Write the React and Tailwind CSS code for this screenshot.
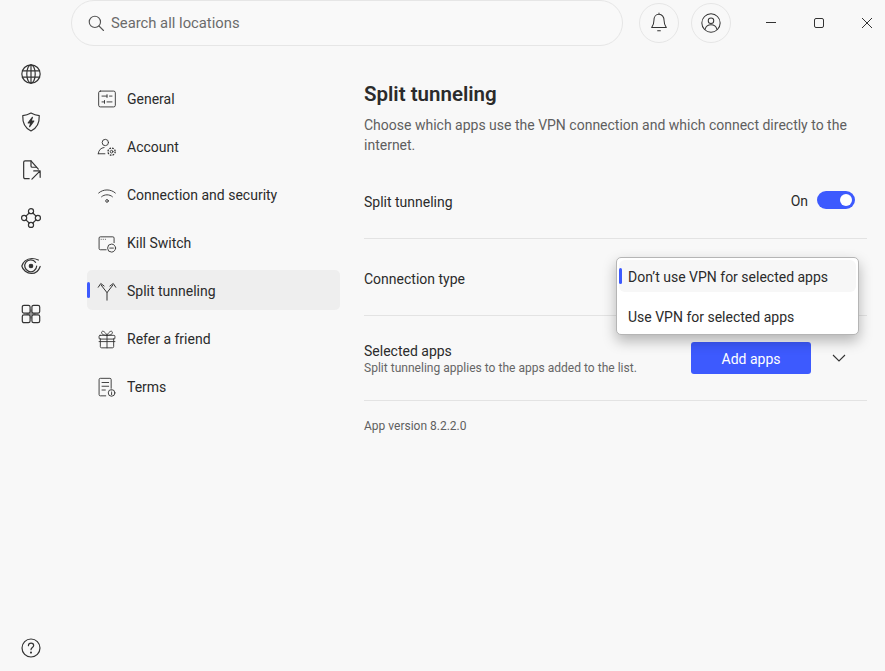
const S = ({ size = 22, sw = 1.3, children, className = "" }) => (
  <svg width={size} height={size} viewBox="0 0 24 24" fill="none" stroke="#333" strokeWidth={sw} strokeLinecap="round" strokeLinejoin="round" className={className}>{children}</svg>
);

const Globe = () => (<S><circle cx="12" cy="12" r="10"/><ellipse cx="12" cy="12" rx="4.600" ry="10"/><path d="M12 2v20M2.600 8.500h18.800M2.600 15.500h18.800"/></S>);
const Shield = () => (<S><path d="M12 2.200c3 1.800 5.600 2.600 9 2.800.3 7.600-1.800 13.600-9 16.800C4.800 18.600 2.700 12.600 3 5c3.400-.2 6-1 9-2.800z"/><path d="M13.500 7l-4.500 6h3l-1.500 4 4.500-6h-3z" fill="#333"/></S>);
const FileOut = () => (<S><path d="M10 21.500H5.500A1.500 1.500 0 0 1 4 20V3.500A1.500 1.500 0 0 1 5.500 2H12l8 9"/><path d="M12 2v5.500c0 1 .5 1.500 1.500 1.500H18"/><path d="M13 22l9-9M15 13h7v7"/></S>);
const Nodes = () => (<S><circle cx="12" cy="4.500" r="2.800"/><circle cx="12" cy="19.500" r="2.800"/><circle cx="4.500" cy="12" r="2.800"/><circle cx="19.500" cy="12" r="2.800"/><path d="M10 6.500l-3.500 3.500M14 6.500l3.500 3.500M10 17.500L6.500 14M14 17.500l3.500-3.500"/></S>);
const Target = () => (<S><path d="M20 5.500C18 4.500 15.500 3.800 13 3.800 7 3.800 3 8 2 12c1 4.500 5.500 8.200 10.500 8.200 4.500 0 8-3.300 9.500-7.700"/><path d="M17 8a6.500 6.500 0 1 0 1.200 4"/><circle cx="12" cy="12" r="1.900" fill="#333"/></S>);
const Apps = () => (<S><path d="M11 7h2v4h4v2h-4v4h-2v-4H7v-2h4z" fill="#999" stroke="none"/><rect x="2.500" y="2.500" width="8.500" height="8.500" rx="1.800"/><rect x="13" y="2.500" width="8.500" height="8.500" rx="1.800"/><rect x="2.500" y="13" width="8.500" height="8.500" rx="1.800"/><rect x="13" y="13" width="8.500" height="8.500" rx="1.800"/></S>);
const Help = () => (<S><circle cx="12" cy="12" r="9.800"/><path d="M9.200 9.500c0-1.700 1.300-2.800 2.900-2.800s2.800 1.100 2.800 2.500c0 2.200-2.900 2.300-2.900 4.600"/><circle cx="12" cy="17" r=".5" fill="#333"/></S>);

const Sliders = () => (<S size={20} sw={1.1}><rect x="2" y="2.500" width="20" height="19" rx="2"/><path d="M6 8.500h6M15 8.500h3M12 6.800v3.400M6 15.500h3M12 15.500h6M9 13.800v3.400"/></S>);
const AccountI = () => (<S size={21} sw={1.1}><circle cx="10" cy="6" r="3.800"/><path d="M1.500 19.500c.5-4.500 3-7 7-7.500M1.500 19.500h8"/><circle cx="17.500" cy="17" r="4.300" strokeDasharray="2 1.400" strokeLinecap="butt" strokeWidth="1.600"/><circle cx="17.500" cy="17" r="1.600"/></S>);
const Wifi = () => (<S size={21} sw={1.1}><path d="M2 9c5.500-5 14.500-5 20 0M5.500 13.500c3.500-3.200 9.500-3.200 13 0"/><circle cx="12" cy="18.500" r="1.600"/></S>);
const Kill = () => (<S size={21} sw={1.1}><path d="M11 19.500H4a1.500 1.500 0 0 1-1.500-1.500V5.500A1.500 1.500 0 0 1 4 4h15A1.500 1.500 0 0 1 20.500 5.500V11"/><path d="M5 7h.01M7.500 7h.01M10 7h.01"/><circle cx="17.500" cy="17.500" r="4.800"/><path d="M15.300 17.500h4.400"/></S>);
const Split = () => (<S size={22} sw={1.2}><path d="M12 23v-9L5 5M12 14l7-9M1.500 7.500L4.500 3l4 3M15.500 6l4-3 3 4.500"/></S>);
const Gift = () => (<S size={21} sw={1.1}><path d="M4 11v9.500A1.500 1.500 0 0 0 5.500 22h13a1.500 1.500 0 0 0 1.500-1.500V11"/><rect x="2.500" y="7" width="19" height="4.500" rx="1.200"/><path d="M12 7v15M2.500 14.500h19M12 7C10 2.500 6 .5 5.500 3.500 5.200 6 9 7 12 7zM12 7c2-4.500 6-6.500 6.500-3.500.3 2.500-3.500 3.500-6.500 3.500z"/></S>);
const Terms = () => (<S size={23} sw={1.1}><path d="M10.500 22H4a1.500 1.500 0 0 1-1.500-1.500v-18A1.500 1.500 0 0 1 4 1h11.500A1.500 1.500 0 0 1 17 2.500V13"/><path d="M6 6h8M6 10.500h8M6 15h4"/><circle cx="17.500" cy="18.500" r="4"/><path d="M17.500 18v2.700M17.500 16.200h.01"/></S>);

const rail = [Globe, Shield, FileOut, Nodes, Target, Apps];
const nav = [
  ["General", Sliders], ["Account", AccountI], ["Connection and security", Wifi], ["Kill Switch", Kill],
  ["Split tunneling", Split], ["Refer a friend", Gift], ["Terms", Terms],
];

export default function App() {
  return (
    <div className="flex h-[671px] w-[885px] overflow-hidden bg-[#f8f8f8] text-[#2b2b2b]" style={{ fontFamily: 'Roboto, sans-serif' }}>
      <aside className="flex w-[62px] shrink-0 flex-col items-center pb-[11px] pt-[49px]">
        <div className="flex flex-col gap-[24px] pt-[13px]">
          {rail.map((I, i) => <div key={i} className="flex h-[24px] w-[24px] items-center justify-center"><I /></div>)}
        </div>
        <div className="mt-auto flex h-[24px] items-center"><Help /></div>
      </aside>

      <div className="flex min-w-0 flex-1 flex-col">
        <header className="flex h-[45px] shrink-0 items-center pl-[9px]">
          <div className="flex h-[46px] w-[552px] shrink-0 items-center gap-[6px] rounded-full border border-[#e6e6e6] bg-[#f9f9f9] pl-[15px]">
            <svg width="18" height="18" viewBox="0 0 24 24" fill="none" stroke="#555" strokeWidth="1.500" strokeLinecap="round"><circle cx="10.500" cy="10.500" r="7.500"/><path d="M16 16l6 6"/></svg>
            <span className="pt-[2px] text-[14.8px] text-[#6b6b6b]">Search all locations</span>
          </div>
          <button className="ml-[16px] flex h-[40px] w-[40px] shrink-0 items-center justify-center rounded-full border border-[#e6e6e6]">
            <S size={22} sw={1.1}><path d="M12 2.500c-3.500 0-5.500 3-5.500 6.500 0 4-1 6-2.500 8h16c-1.500-2-2.500-4-2.500-8 0-3.500-2-6.500-5.500-6.500zM12 1v1.500M10.500 20.500h3"/></S>
          </button>
          <button className="ml-[12px] flex h-[40px] w-[40px] shrink-0 items-center justify-center rounded-full border border-[#e6e6e6]">
            <S size={22} sw={1.1}><circle cx="12" cy="12" r="10"/><circle cx="12" cy="9.500" r="3"/><path d="M5.500 19c1-3.500 3.500-5 6.500-5s5.500 1.500 6.500 5"/></S>
          </button>
          <div className="ml-[16px] flex">
            <div className="flex h-[46px] w-[48px] items-center justify-center"><span className="h-[1px] w-[10px] bg-[#333]" /></div>
            <div className="flex h-[46px] w-[48px] items-center justify-center"><span className="h-[10px] w-[10px] rounded-[2px] border border-[#333]" /></div>
            <div className="flex h-[46px] w-[48px] items-center justify-center">
              <svg width="12" height="12" viewBox="0 0 12 12" stroke="#333" strokeWidth="1"><path d="M1 1l10 10M11 1L1 11"/></svg>
            </div>
          </div>
        </header>

        <div className="flex flex-1">
          <nav className="ml-[25px] flex w-[253px] shrink-0 flex-col gap-[8px] pt-[33px]">
            {nav.map(([label, I]) => {
              const on = label === "Split tunneling";
              return (
                <div key={label} className={`relative flex h-[40px] items-center gap-[10px] rounded-[5px] pl-[10px] pt-[2px] text-[14px] ${on ? "bg-[#eeeeee]" : ""}`}>
                  {on && <span className="absolute left-0 top-[12px] h-[16px] w-[3px] rounded-full bg-[#3d5afe]" />}
                  <span className="flex w-[20px] justify-center"><I /></span>
                  <span>{label}</span>
                </div>
              );
            })}
          </nav>

          <main className="ml-[24px] w-[503px] shrink-0 pt-[35px]">
            <h1 className="text-[20.5px] font-semibold leading-[28px]">Split tunneling</h1>
            <p className="mt-[7px] text-[14px] leading-[20px] text-[#5f5f5f]">Choose which apps use the VPN connection and which connect directly to the internet.</p>

            <div className="mt-[10px] flex h-[74px] items-center justify-between border-b border-[#e3e3e3] text-[14px]">
              <span className="pt-[2px]">Split tunneling</span>
              <span className="flex items-center gap-[9px] pr-[12px]">
                On
                <span className="mb-[4px] flex h-[18px] w-[38px] items-center justify-end rounded-full bg-[#3d5afe] pr-[3px]"><span className="h-[12px] w-[12px] rounded-full bg-white" /></span>
              </span>
            </div>

            <div className="relative flex h-[77px] items-center border-b border-[#e3e3e3] text-[14px]">
              <span className="pt-[4px]">Connection type</span>
              <div className="absolute left-[252px] top-[18px] z-10 flex h-[78px] w-[243px] flex-col gap-[8px] rounded-[5px] border border-[#b5b5b5] bg-white p-[2px] shadow-[0_6px_14px_rgba(0,0,0,0.28)]">
                <div className="relative flex h-[32px] items-center rounded-[6px] bg-[#f7f7f7] pl-[9px] pt-[2px]">
                  <span className="absolute left-0 top-[8px] h-[16px] w-[3px] rounded-full bg-[#3d5afe]" />
                  Don’t use VPN for selected apps
                </div>
                <div className="flex h-[32px] items-center pl-[9px] pt-[2px]">Use VPN for selected apps</div>
              </div>
            </div>

            <div className="flex h-[85px] items-center justify-between border-b border-[#e3e3e3]">
              <div className="pt-[2px]">
                <div className="text-[14px] leading-[18px]">Selected apps</div>
                <div className="text-[12.05px] leading-[16px] text-[#666]">Split tunneling applies to the apps added to the list.</div>
              </div>
              <div className="flex items-center">
                <button className="flex h-[32px] w-[120px] items-center justify-center rounded-[3px] bg-[#3d5afe] pt-[2px] text-[14px] text-white">Add apps</button>
                <span className="flex w-[56px] justify-center">
                  <svg width="14" height="8" viewBox="0 0 14 8" fill="none" stroke="#333" strokeWidth="1.100"><path d="M1 1l6 6 6-6"/></svg>
                </span>
              </div>
            </div>

            <div className="mt-[17px] text-[12px] leading-[16px] text-[#5f5f5f]">App version 8.2.2.0</div>
          </main>
        </div>
      </div>
    </div>
  );
}
